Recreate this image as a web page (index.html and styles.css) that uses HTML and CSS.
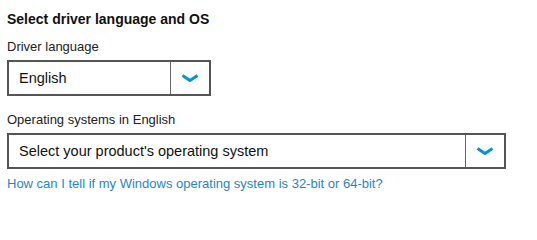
FILE: index.html
```html
<!DOCTYPE html>
<html lang="en">
<head>
  <meta charset="UTF-8">
  <meta name="viewport" content="width=device-width, initial-scale=1.0">
  <title>Select driver language and OS</title>
  <link rel="stylesheet" href="styles.css">
</head>
<body>
  <section class="driver-select">
    <h2>Select driver language and OS</h2>

    <label class="field-label" for="lang">Driver language</label>
    <div class="select-box lang-box" id="lang">
      <span class="select-text">English</span>
      <span class="select-btn">
        <svg width="18" height="8" viewBox="0 0 18 8"><polyline points="1.5,1.5 9,6.5 16.5,1.5" fill="none" stroke="#0096d6" stroke-width="3"/></svg>
      </span>
    </div>

    <label class="field-label os-label" for="os">Operating systems in English</label>
    <div class="select-box os-box" id="os">
      <span class="select-text">Select your product's operating system</span>
      <span class="select-btn">
        <svg width="18" height="8" viewBox="0 0 18 8"><polyline points="1.5,1.5 9,6.5 16.5,1.5" fill="none" stroke="#0096d6" stroke-width="3"/></svg>
      </span>
    </div>

    <a class="help-link" href="#">How can I tell if my Windows operating system is 32-bit or 64-bit?</a>
  </section>
</body>
</html>
```

FILE: styles.css
```css
body {
  margin: 0;
  font-family: "Liberation Sans", Arial, sans-serif;
  color: #111;
  background: #fff;
}
.driver-select {
  padding: 10px 7px;
  display: flex;
  flex-direction: column;
  align-items: flex-start;
}
h2 {
  margin: 0;
  font-size: 14px;
  line-height: 18px;
  font-weight: bold;
}
.field-label {
  margin-top: 11px;
  font-size: 13px;
  line-height: 16px;
  color: #222;
}
.os-label {
  margin-top: 16px;
}
.select-box {
  margin-top: 5px;
  height: 36px;
  box-sizing: border-box;
  border: 2px solid #555;
  display: flex;
  align-items: stretch;
}
.lang-box {
  width: 204px;
}
.os-box {
  width: 499px;
}
.select-text {
  flex: 1;
  display: flex;
  align-items: center;
  padding-left: 10px;
  font-size: 14.5px;
  color: #111;
}
.select-btn {
  width: 38px;
  border-left: 1px solid #666;
  display: flex;
  align-items: center;
  justify-content: center;
}
.help-link {
  margin-top: 7px;
  font-size: 13px;
  line-height: 16px;
  color: #1f86c8;
  text-decoration: none;
}
```
